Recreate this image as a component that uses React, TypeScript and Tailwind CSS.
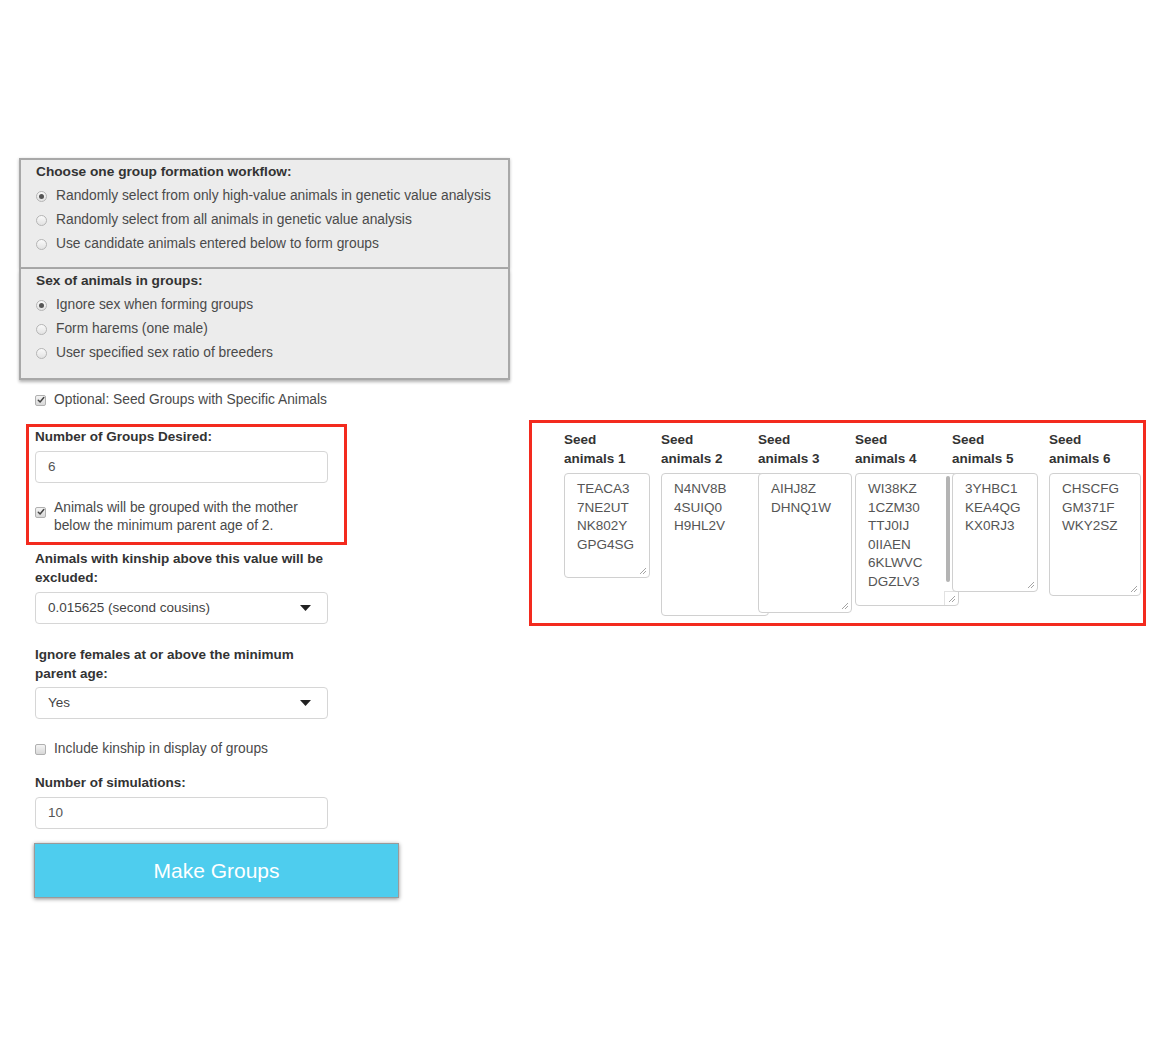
import React from "react";

const Radio = ({ checked }: { checked?: boolean }) => (
  <span className="inline-flex h-[11px] w-[11px] shrink-0 items-center justify-center rounded-full border border-[#b5b5b5] bg-gradient-to-b from-[#fafafa] to-[#e2e2e2]">
    {checked && <span className="h-[5px] w-[5px] rounded-full bg-[#555]" />}
  </span>
);

const Check = ({ checked }: { checked?: boolean }) => (
  <span className="inline-flex h-[11px] w-[11px] shrink-0 items-center justify-center rounded-[2px] border border-[#b0b0b0] bg-gradient-to-b from-[#f4f4f4] to-[#d8d8d8]">
    {checked && (
      <svg width="8" height="8" viewBox="0 0 8 8">
        <path d="M1.3 4.2 L3.1 6 L6.8 1.6" fill="none" stroke="#444" strokeWidth="1.5" strokeLinecap="round" strokeLinejoin="round" />
      </svg>
    )}
  </span>
);

const RadioRow = ({ label, checked }: { label: string; checked?: boolean }) => (
  <div className="flex h-6 items-center gap-[9px] text-[13.8px] text-[#4a4a4a]">
    <Radio checked={checked} />
    <span>{label}</span>
  </div>
);

const Caret = () => (
  <svg width="11" height="6" viewBox="0 0 11 6">
    <path d="M0 0 H11 L5.5 6 Z" fill="#222" />
  </svg>
);

const Resize = () => (
  <svg width="7" height="7" viewBox="0 0 7 7" className="absolute bottom-[3px] right-[3px]">
    <path d="M1 7 L7 1 M4 7 L7 4" stroke="#9a9a9a" strokeWidth="0.9" />
  </svg>
);

type Col = { items: string[]; w: number; h: number; scroll?: boolean };

const cols: Col[] = [
  { items: ["TEACA3", "7NE2UT", "NK802Y", "GPG4SG"], w: 86, h: 105 },
  { items: ["N4NV8B", "4SUIQ0", "H9HL2V"], w: 108, h: 143 },
  { items: ["AIHJ8Z", "DHNQ1W"], w: 94, h: 140 },
  { items: ["WI38KZ", "1CZM30", "TTJ0IJ", "0IIAEN", "6KLWVC", "DGZLV3"], w: 104, h: 133, scroll: true },
  { items: ["3YHBC1", "KEA4QG", "KX0RJ3"], w: 86, h: 119 },
  { items: ["CHSCFG", "GM371F", "WKY2SZ"], w: 92, h: 123 },
];

export default function App() {
  return (
    <div
      className="min-h-[1056px] w-[1152px] bg-white"
      style={{ fontFamily: '"Liberation Sans", Arial, sans-serif' }}
    >
      <div className="flex items-start pl-[19px] pt-[158px]">
        {/* Left column */}
        <div className="w-[491px] shrink-0">
          <div className="border-2 border-[#a8a8a8] bg-[#ececec] pb-[11px] pl-[15px] shadow-[0_1px_3px_rgba(0,0,0,0.25)]">
            <div className="flex h-6 items-center text-[13.7px] font-bold text-[#333]">
              Choose one group formation workflow:
            </div>
            <RadioRow checked label="Randomly select from only high-value animals in genetic value analysis" />
            <RadioRow label="Randomly select from all animals in genetic value analysis" />
            <RadioRow label="Use candidate animals entered below to form groups" />
          </div>
          <div className="border-2 border-t-0 border-[#a8a8a8] bg-[#ececec] pb-[13px] pl-[15px] shadow-[0_2px_3px_rgba(0,0,0,0.3)]">
            <div className="flex h-6 items-center text-[13.7px] font-bold text-[#333]">
              Sex of animals in groups:
            </div>
            <RadioRow checked label="Ignore sex when forming groups" />
            <RadioRow label="Form harems (one male)" />
            <RadioRow label="User specified sex ratio of breeders" />
          </div>

          <div className="pl-[16px]">
            <div className="mt-[10px] flex h-5 items-center gap-[8px] text-[13.8px] text-[#4a4a4a]">
              <Check checked />
              <span>Optional: Seed Groups with Specific Animals</span>
            </div>

            <div className="-ml-[9px] mt-[14px] w-[321px] border-[3px] border-[#f32a1e] pb-[7px] pl-[6px] pr-[16px]">
              <div className="text-[13.5px] font-bold leading-5 text-[#333]">Number of Groups Desired:</div>
              <div className="mt-[4px] flex h-8 items-center rounded-[4px] border border-[#d6d6d6] pl-[12px] text-[13.5px] text-[#555]">
                6
              </div>
              <div className="mt-[16px] flex items-start gap-[8px] text-[13.8px] leading-[18px] text-[#4a4a4a]">
                <span className="mt-[4px]">
                  <Check checked />
                </span>
                <span>
                  Animals will be grouped with the mother
                  <br />
                  below the minimum parent age of 2.
                </span>
              </div>
            </div>

            <div className="mt-[4px] w-[293px] text-[13.5px] font-bold leading-[19px] text-[#333]">
              Animals with kinship above this value will be excluded:
            </div>
            <div className="mt-[5px] flex h-8 w-[293px] items-center justify-between rounded-[4px] border border-[#d6d6d6] pl-[12px] pr-[16px] text-[13.5px] text-[#444]">
              <span>0.015625 (second cousins)</span>
              <Caret />
            </div>

            <div className="mt-[21px] w-[293px] text-[13.5px] font-bold leading-[19px] text-[#333]">
              Ignore females at or above the minimum parent age:
            </div>
            <div className="mt-[4px] flex h-8 w-[293px] items-center justify-between rounded-[4px] border border-[#d6d6d6] pl-[12px] pr-[16px] text-[13.5px] text-[#444]">
              <span>Yes</span>
              <Caret />
            </div>

            <div className="mt-[20px] flex h-5 items-center gap-[8px] text-[13.8px] text-[#4a4a4a]">
              <Check />
              <span>Include kinship in display of groups</span>
            </div>

            <div className="mt-[14px] text-[13.5px] font-bold leading-[19px] text-[#333]">Number of simulations:</div>
            <div className="mt-[5px] flex h-8 w-[293px] items-center rounded-[4px] border border-[#d6d6d6] pl-[12px] text-[13.5px] text-[#555]">
              10
            </div>

            <button className="-ml-[1px] mt-[14px] flex h-[55px] w-[365px] items-center justify-center border border-[#9a9a9a] bg-[#4ecdee] text-[21px] text-white shadow-[0_1px_4px_rgba(0,0,0,0.45)]">
              Make Groups
            </button>
          </div>
        </div>

        {/* Right panel */}
        <div className="ml-[19px] mt-[262px] h-[206px] w-[617px] shrink-0 border-[3px] border-[#f32a1e] pl-[32px] pt-[7px]">
          <div className="grid grid-cols-[97px_97px_97px_97px_97px_97px]">
            {cols.map((c, i) => (
              <div key={i} className="flex flex-col">
                <div className="text-[13.5px] font-bold leading-[19px] text-[#333]">
                  Seed
                  <br />
                  animals {i + 1}
                </div>
                <div
                  className="relative mt-[5px] rounded-[4px] border border-[#d0d0d0] bg-white pl-[12px] pt-[6px] text-[13.5px] leading-[18.6px] text-[#555]"
                  style={{ width: c.w, height: c.h }}
                >
                  {c.items.map((t) => (
                    <div key={t}>{t}</div>
                  ))}
                  {c.scroll && (
                    <>
                      <div className="absolute right-[8px] top-[2px] h-[106px] w-[4px] rounded-full bg-[#b4b4b4]" />
                      <div className="absolute bottom-0 right-0 h-[14px] w-[14px] border-l border-t border-[#e2e2e2]" />
                    </>
                  )}
                  <Resize />
                </div>
              </div>
            ))}
          </div>
        </div>
      </div>
    </div>
  );
}
